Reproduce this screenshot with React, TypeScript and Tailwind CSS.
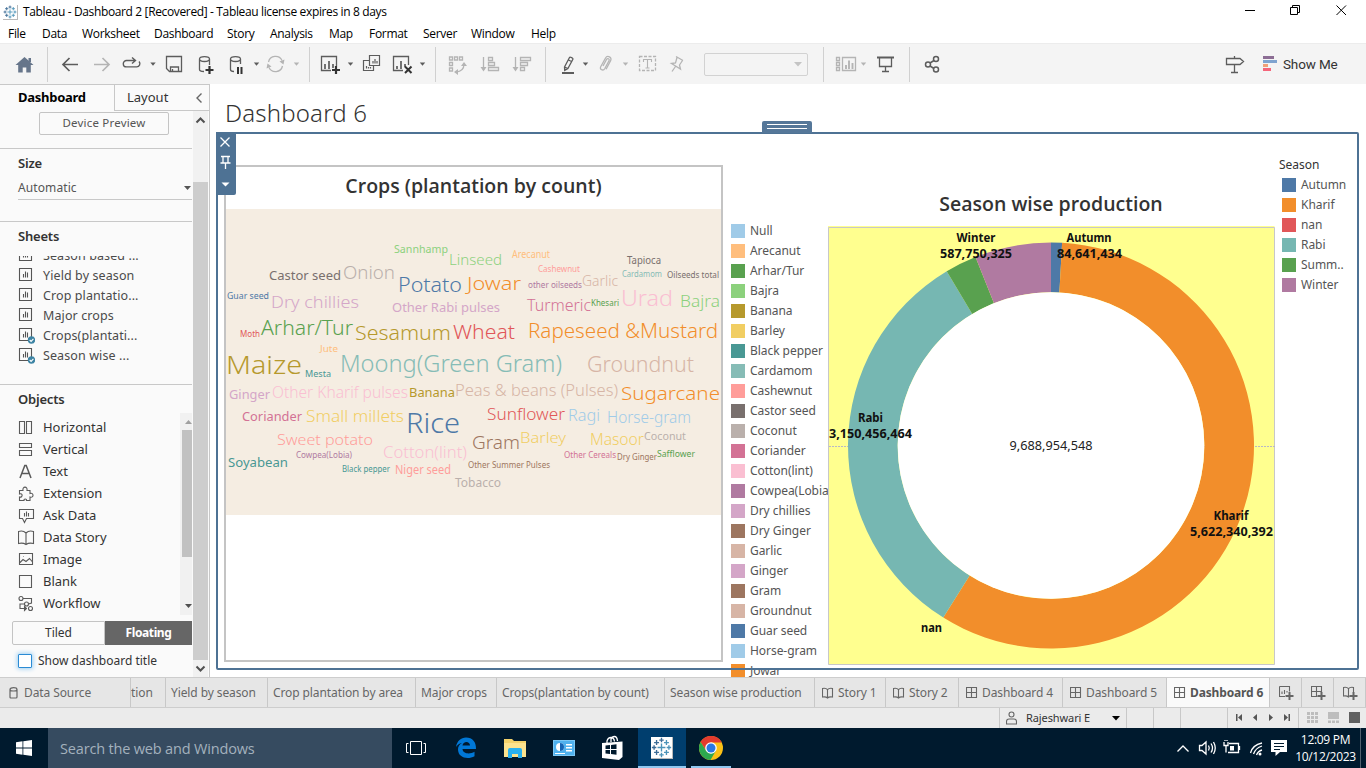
import React from "react";

type Kids = { children?: React.ReactNode };

/* Toolbar glyph: a cell that spans [x, x+w] of the window and keeps window coordinates inside. */
function Cell({ x, w, y = 44, h = 40, c = "#5c5c5c", sw = 1.3, children }: Kids & { x: number; w: number; y?: number; h?: number; c?: string; sw?: number }) {
  return (
    <svg className="block shrink-0" width={w} height={h} viewBox={`${x} ${y} ${w} ${h}`} fill="none" stroke={c} strokeWidth={sw}>
      {children}
    </svg>
  );
}

const Caret = ({ x, y = 64, c = "#5c5c5c" }: { x: number; y?: number; c?: string }) => (
  <path d={`M${x - 2.7} ${y - 1.5}h5.4l-2.7 3.2z`} fill={c} stroke="none" />
);
const Sep = ({ x }: { x: number }) => <path d={`M${x + 0.5} 47v35`} stroke="#d0d0d0" strokeWidth="1" />;
const LIGHT = "#b4b4b4";

const SPOKES = [[0, 0, 3.2], [0, -6, 1.8], [0, 6, 1.8], [-6, 0, 1.8], [6, 0, 1.8], [-4, -4, 2], [4, -4, 2], [-4, 4, 2], [4, 4, 2]];
function TableauMark({ s }: { s: number }) {
  return (
    <svg width={s} height={s} viewBox="-8.5 -8.5 17 17" className="block shrink-0 border-r border-b border-[#b9b9b9] bg-white">
      {SPOKES.map(([x, y, r], i) => (
        <path key={i} d={`M${x - r} ${y}h${2 * r}M${x} ${y - r}v${2 * r}`} stroke={i % 2 ? "#3d6c96" : "#4c93b8"} strokeWidth="1.1" />
      ))}
    </svg>
  );
}

function TitleBar() {
  return (
    <div className="flex h-[24px] items-center bg-white">
      <div className="ml-[3px] mr-[5px]"><TableauMark s={15} /></div>
      <span className="whitespace-nowrap text-[12px] text-black tracking-[-0.36px]">Tableau - Dashboard 2 [Recovered] - Tableau license expires in 8 days</span>
      <svg className="ml-auto block" width="126" height="24" viewBox="1240 0 126 24" fill="none" stroke="#000" strokeWidth="1">
        <path d="M1245 10.5h10M1290.5 7.5h7v7h-7zM1292.5 7v-1.500h7v7h-1.500M1336.500 5.500l9.500 9.500M1346 5.500l-9.500 9.500" />
      </svg>
    </div>
  );
}

const MENU: [string, string][] = [
  ["File", "w-[34px]"], ["Data", "w-[40px]"], ["Worksheet", "w-[72px]"], ["Dashboard", "w-[73px]"], ["Story", "w-[43px]"],
  ["Analysis", "w-[59px]"], ["Map", "w-[40px]"], ["Format", "w-[54px]"], ["Server", "w-[48px]"], ["Window", "w-[60px]"], ["Help", "w-[40px]"],
];

function MenuBar() {
  return (
    <div className="flex h-[19px] items-center bg-white pl-[8px] text-[12px] tracking-[-0.3px] text-black">
      {MENU.map(([t, w]) => <span key={t} className={w}>{t}</span>)}
    </div>
  );
}

function Toolbar() {
  return (
    <div className="flex h-[41px] items-center border-t border-[#ececec] bg-[#f4f4f4]">
      <Cell x={0} w={47}><path d="M24.500 57l9 8h-2.700v7.500h-4.500v-5h-3.600v5h-4.500V65h-2.700z" fill="#66758a" stroke="none" /><path d="M28.500 58h2.500v4h-2.500z" fill="#66758a" stroke="none" /></Cell>
      <Cell x={47} w={39} sw={1.7}><Sep x={47} /><path d="M78 64.500H63M69.500 58l-6.500 6.500 6.500 6.500" /></Cell>
      <Cell x={86} w={30} c={LIGHT} sw={1.7}><path d="M94 64.500h15M102.500 58l6.500 6.500-6.500 6.500" /></Cell>
      <Cell x={116} w={44} sw={1.4}><path d="M135 60.500h-8.500a3.200 3.200 0 0 0 0 6.400h10a3.200 3.200 0 0 0 2.500-5.400M132 57.500l3.500 3-3.500 3" /><Caret x={153} /></Cell>
      <Cell x={160} w={30}><path d="M166.500 56.500h15v15h-12l-3-3zM170.500 71v-4h8v4M172.500 69v2" /></Cell>
      <Cell x={190} w={34}><path d="M204 71.500c-3 0-4.500-.8-4.500-2V59c0-3.300 10-3.300 10 0v6M199.500 59c0 3.300 10 3.300 10 0" /><path d="M209.500 66v8M205.500 70h8" strokeWidth="2.200" stroke="#333" /></Cell>
      <Cell x={224} w={38}><path d="M234 71.500c-2.500 0-3.500-.8-3.500-2V59c0-3.300 10-3.300 10 0v5M230.500 59c0 3.300 10 3.300 10 0" /><path d="M238 67v7M241.500 67v7" strokeWidth="2" stroke="#333" /><Caret x={256.500} /></Cell>
      <Cell x={262} w={47} c={LIGHT}><path d="M268.500 62a7.200 7.200 0 0 1 13.500-1.500M282.500 66a7.200 7.200 0 0 1-13.500 1.500" /><path d="M284.500 59.500l-1 5-4-3zM266.500 68.500l1-5 4 3z" fill={LIGHT} stroke="none" /><Caret x={296.500} c={LIGHT} /></Cell>
      <Cell x={309} w={48}><Sep x={309} /><path d="M331 70.500h-9.500v-14h15V66" /><path d="M325 64v5M329 61v8M333 64v4" strokeWidth="1.700" /><path d="M336 66v8M332 70h8" strokeWidth="2.200" stroke="#333" /><Caret x={350.500} /></Cell>
      <Cell x={357} w={30} sw={1.2}><path d="M369.500 55.500h10v10h-10zM369 60.500h-5.500v10h10V66M373 61v2.500M375 59v4.500M377 61v2.500M366.500 66v2.500M368.500 67v1.500M370.500 67v1.500" /></Cell>
      <Cell x={387} w={48}><path d="M403 70.500h-9.500v-14h15V65" /><path d="M397 66v3M401 61v8M405 64v3" strokeWidth="1.700" /><path d="M405 66.500l6.500 6.500M411.500 66.500L405 73" strokeWidth="2" stroke="#333" /><Caret x={422.500} /></Cell>
      <Cell x={435} w={40} c={LIGHT}><Sep x={435} /><path d="M449.500 57h3v3h-3zM454.500 57h3v3h-3zM459.500 57h3v3h-3zM449.500 62.500h3v3h-3zM449.500 68h3v3h-3zM464 64c0 5-2 7.500-8 8" /><path d="M461 66l3-4 3 4zM458 69l-4 3 4 3z" fill={LIGHT} stroke="none" /></Cell>
      <Cell x={475} w={32} c={LIGHT}><path d="M483.500 57v12M488.500 57.500h4v3h-4zM488.500 62.500h6v3h-6zM488.500 67.500h10v3h-10z" /><path d="M480.500 67h6l-3 4.500z" fill={LIGHT} stroke="none" /></Cell>
      <Cell x={507} w={38} c={LIGHT}><path d="M515.500 57v12M520.500 57.500h10v3h-10zM520.500 62.500h7v3h-7zM520.500 67.500h4v3h-4z" /><path d="M512.500 67h6l-3 4.500z" fill={LIGHT} stroke="none" /></Cell>
      <Cell x={545} w={46}><Sep x={545} /><path d="M564.500 67l5-9.500c.5-1 4 .6 3.400 1.700l-5 9.300-3.200 1.800zM564.500 67l3.400 1.700M568.500 60l3 1.500" /><path d="M562 73h12" strokeWidth="2" /><Caret x={585.500} /></Cell>
      <Cell x={591} w={42} c={LIGHT}><path d="M603 66l3.500-6.500c1-1.800 3.400-.5 2.500 1.200l-4.300 8c-1.500 2.600-5.500.8-4-2l4.700-8.500c2-3.500 7-1 5.200 2.500l-4.500 8.500" /><Caret x={625.500} c={LIGHT} /></Cell>
      <Cell x={633} w={30} c={LIGHT}><path d="M639.500 56.500h16v14h-16z" strokeDasharray="3 1.500" /><path d="M643.500 62v-2.500h8V62M647.500 59.500v8.500M645.500 68h4" strokeWidth="1.100" /></Cell>
      <Cell x={663} w={41} c={LIGHT}><path d="M676 56.500l7 4M677 57.500l-1.500 5.500-4 .5 9 5.500-1-4 3-4.500M675.500 66.500l-3.500 5" /></Cell>
      <div className="flex h-[23px] w-[104px] items-center justify-end rounded-[2px] border border-[#d2d2d2] pr-[5px]"><svg width="8" height="5"><path d="M0 0h8l-4 4.500z" fill="#c4c4c4" /></svg></div>
      <Cell x={808} w={63} c={LIGHT}><Sep x={823} /><path d="M836.500 57.500h3v3h-3zM836.500 62.500h3v3h-3zM836.500 67.500h3v3h-3zM842.500 57.500h13v13h-13z" /><path d="M846 65v4M849 60.500v8.500M852.500 63v6" strokeWidth="1.900" /><Caret x={863.500} c={LIGHT} /></Cell>
      <Cell x={871} w={38}><path d="M877 57.500h17" strokeWidth="2" /><path d="M879.500 58v8.500h12V58M885.500 66.500v5M882 71.500h7" /></Cell>
      <Cell x={909} w={40} sw={1.500}><Sep x={909} /><circle cx="928" cy="64.500" r="2.500" /><circle cx="936" cy="59" r="2.500" /><circle cx="936" cy="69.500" r="2.500" /><path d="M930 63l4-2.500M930 66l4 2.500" /></Cell>
      <div className="ml-auto flex items-center">
        <Cell x={1220} w={63}>
          <path d="M1226.500 58.500h13.500l3.500 3-3.500 3h-13.500zM1234.500 56v2.500M1234.500 64.500v8M1231 72.500h7" />
          <path d="M1263 57.500h11" stroke="#8c6d94" strokeWidth="3" /><path d="M1263 61.500h14" stroke="#7fa4d0" strokeWidth="3" /><path d="M1263 65.500h5" stroke="#f0a078" strokeWidth="3" /><path d="M1263 69.500h8" stroke="#f5657a" strokeWidth="3" />
        </Cell>
        <span className="w-[83px] whitespace-nowrap font-['Roboto'] text-[13.500px] tracking-[-0.15px] text-[#333]">Show Me</span>
      </div>
    </div>
  );
}

const SHEETS: [string, boolean][] = [["Season based ...", false], ["Yield by season", false], ["Crop plantatio...", false], ["Major crops", false], ["Crops(plantati...", true], ["Season wise ...", true]];

const OBJECTS: [string, React.ReactNode][] = [
  ["Horizontal", <path d="M1.500 2.500h5v12h-5zM8.500 2.500h5v12h-5z" />],
  ["Vertical", <path d="M1.500 2.500h12v4h-12zM1.500 9.500h12v5h-12z" />],
  ["Text", <path d="M2 15L6.800 2.500h1.400L13 15M3.800 10.500h7.400" strokeWidth="1.500" />],
  ["Extension", <path d="M1.500 5.500h3.500c-1-4.500 5-4.500 4 0h3v3c4-1.500 4 5 0 3.500v3.500h-3.500c.5-2-3-2-2.500 0H1.500v-3.500c3.500 1 3.500-4.500 0-3z" />],
  ["Ask Data", <path d="M1.500 2.500h14v9h-7l-2 4-2-4h-3zM6.500 6v3.500M8.500 4.500v5M10.500 6v3.500" />],
  ["Data Story", <path d="M.5 2.500c3-1 6 0 7.500 1.500 1.500-1.500 4.500-2.500 7.500-1.500v12c-3-.7-6 0-7.500 1-1.500-1-4.500-1.700-7.500-1zM8 4v11" />],
  ["Image", <path d="M1.500 2.500h13v11h-13zM2 11.500l3-3 3 2 3.500-3 3 3.500M5 5.500h.5" />],
  ["Blank", <path d="M1.500 2.500h12v12h-12z" />],
  ["Workflow", <g><circle cx="3" cy="3.500" r="2" /><circle cx="8.500" cy="9" r="2" /><circle cx="12.500" cy="13.500" r="2" /><path d="M5 3.500h8.500V8l-3 1M6.500 9H2v4.500h6M6.500 11.500v4l2-2z" /></g>],
];

function SidePanel() {
  return (
    <div className="relative flex w-[210px] shrink-0 flex-col border-t border-r border-[#c8c8c8] bg-[#fafafa] font-['Noto_Sans'] text-[#333]">
      <div className="flex h-[26px] shrink-0">
        <div className="w-[114px] pl-[18px] text-[13px] font-bold leading-[25px] tracking-[-0.27px] text-black">Dashboard</div>
        <div className="flex flex-1 items-center justify-between border-b border-l border-[#c8c8c8] pl-[12px] pr-[7px] text-[13px]">
          <span>Layout</span>
          <svg width="6" height="12" fill="none" stroke="#666" strokeWidth="1.400"><path d="M5.500 1.500L1 6l4.500 4.500" /></svg>
        </div>
      </div>
      <div className="flex min-h-0 flex-1">
        <div className="flex w-[192px] flex-col">
          <div className="mt-px ml-[39px] h-[23px] w-[130px] rounded-[2px] border border-[#c4c4c4] text-center text-[11.500px] leading-[20px] tracking-[0.2px] text-[#555]">Device Preview</div>
          <div className="mt-[13px] border-t border-[#c8c8c8]" />
          <div className="mt-[5px] pl-[18px] text-[13px] font-semibold leading-[18px] tracking-[-0.2px]">Size</div>
          <div className="ml-[18px] mt-[4px] flex h-[24px] items-center justify-between border-b border-[#c8c8c8] pt-px text-[12px] text-[#555]">
            <span className="tracking-[0.1px]">Automatic</span><svg width="8" height="5"><path d="M0 0h7l-3.500 4z" fill="#555" /></svg>
          </div>
          <div className="mt-[21px] border-t border-[#c8c8c8]" />
          <div className="mt-[5px] pl-[18px] text-[13px] font-semibold leading-[18px] tracking-[-0.2px]">Sheets</div>
          <div className="mt-[11px] flex h-[109px] flex-col justify-end overflow-hidden">
            {SHEETS.map(([t, used]) => (
              <div key={t} className="flex h-[20px] shrink-0 items-center pl-[18px] text-[12.500px] tracking-[0.1px] text-[#4a4a4a]">
                <svg className="mr-[8px]" width="17" height="18" fill="none" stroke="#555" strokeWidth="1.100">
                  <path d="M1.500 2.500h12v12h-12zM5.500 8v3.500M7.500 5.500v6M9.500 6.500v5" />
                  {used && <><circle cx="13.500" cy="14" r="3.700" fill="#3c83a3" stroke="none" /><path d="M11.700 14l1.400 1.400 2.300-2.600" stroke="#fff" /></>}
                </svg>
                <span className="pt-[2px]">{t}</span>
              </div>
            ))}
          </div>
          <div className="mt-[19px] border-t border-[#c8c8c8]" />
          <div className="mt-[5px] pl-[18px] text-[13px] font-semibold leading-[18px] tracking-[-0.2px]">Objects</div>
          <div className="mt-[5px] flex h-[202px]">
            <div className="w-[180px] pt-[3px]">
              {OBJECTS.map(([t, icon]) => (
                <div key={t} className="flex h-[22px] items-center pl-[18px] text-[13px] tracking-[-0.03px]">
                  <svg className="mr-[8px]" width="17" height="17" fill="none" stroke="#5a5a5a" strokeWidth="1.100">{icon}</svg>
                  <span className="pt-[2px]">{t}</span>
                </div>
              ))}
            </div>
            <div className="flex w-[12px] flex-col items-end justify-between bg-[#f1f1f1]">
              <svg width="10" height="17"><path d="M3 11h7l-3.500-4z" fill="#a0a0a0" /></svg>
              <div className="h-[127px] w-[10px] bg-[#c1c1c1]" />
              <svg className="mt-auto" width="10" height="13"><path d="M3 2h7l-3.500 4z" fill="#505050" /></svg>
            </div>
          </div>
          <div className="ml-[12px] mt-[6px] flex h-[24px] text-center text-[12px] leading-[22px]">
            <div className="w-[93px] rounded-l-[2px] border border-[#c4c4c4]">Tiled</div>
            <div className="flex-1 bg-[#666] font-bold leading-[24px] tracking-[-0.4px] text-white">Floating</div>
          </div>
          <div className="mt-[9px] flex items-center pl-[18px] text-[12px]">
            <div className="mr-[6px] h-[14px] w-[14px] rounded-[1px] border border-[#2b8bd4] bg-white shadow-[0_0_4px_1px_#9fd0f3]" />
            <span className="leading-[14px] tracking-[0px]">Show dashboard title</span>
          </div>
        </div>
        <div className="ml-px flex w-[15px] flex-col items-center bg-[#f1f1f1]">
          <svg width="15" height="71" fill="none" stroke="#505050" strokeWidth="2"><path d="M3.500 11.500l4-4 4 4" /></svg>
          <div className="w-full flex-1 bg-[#cdcdcd]" />
          <svg width="15" height="17" fill="none" stroke="#505050" strokeWidth="2"><path d="M3.500 6.500l4 4 4-4" /></svg>
        </div>
      </div>
    </div>
  );
}

const C = {
  lblue: "#a0cbe8", or: "#f28e2b", lor: "#ffbe7d", gr: "#59a14f", lgr: "#8cd17d", br: "#b6992d", ye: "#f1ce63", te: "#499894", lte: "#86bcb6",
  re: "#e15759", lre: "#ff9d9a", gy: "#79706e", lgy: "#bab0ac", pk: "#d37295", lpk: "#fabfd2", pu: "#b07aa1", lpu: "#d4a6c8", bn: "#9d7660", lbn: "#d7b5a6", bl: "#4e79a7",
};

/* word, left, baseline, font size, drawn width, colour */
const WORDS: [string, number, number, number, number, string][] = [
  ["Sannhamp", 394, 253, 11, 54, C.lgr], ["Linseed", 449, 264, 15, 53, C.lgr], ["Castor seed", 269, 279, 13, 72, C.gy], ["Onion", 343, 278, 18.5, 52, C.lgy],
  ["Potato", 398, 291, 19.5, 64, C.bl], ["Guar seed", 227, 299, 9.5, 42, C.bl], ["Dry chillies", 271, 307, 16, 88, C.lpu], ["Other Rabi pulses", 392, 311, 13, 108, C.lpu],
  ["Moth", 240, 337, 8.5, 20, C.re], ["Arhar/Tur", 261, 334, 19.5, 92, C.gr], ["Sesamum", 355, 339, 20, 96, C.br], ["Wheat", 453, 338, 20, 62, C.re],
  ["Jute", 320, 352, 9, 18, C.lor], ["Maize", 226, 373, 26, 76, C.br], ["Mesta", 305, 377, 9, 26, C.te], ["Moong(Green Gram)", 340, 371, 23.5, 222, C.lte],
  ["Ginger", 229, 398, 13, 41, C.lpu], ["Other Kharif pulses", 272, 397, 15.500, 136, C.lpk], ["Banana", 409, 396, 13, 46, C.br], ["Peas & beans (Pulses)", 455, 395, 16, 163, C.lbn],
  ["Coriander", 242, 420, 13, 60, C.pk], ["Small millets", 306, 421, 16, 98, C.ye], ["Rice", 406, 432, 27, 54, C.bl], ["Sweet potato", 277, 444, 15, 96, C.lre],
  ["Gram", 472, 448, 18.500, 48, C.bn], ["Cowpea(Lobia)", 296, 458, 8.500, 56, C.pu], ["Cotton(lint)", 383, 457, 16, 84, C.lpk], ["Soyabean", 228, 466, 13, 60, C.te],
  ["Black pepper", 342, 472, 9, 48, C.te], ["Niger seed", 395, 474, 12, 56, C.lre], ["Other Summer Pulses", 468, 468, 8.500, 82, C.bn], ["Tobacco", 455, 487, 12.500, 46, C.lgy],
  ["Jowar", 467, 289, 19, 54, C.or], ["Arecanut", 512, 258, 10, 38, C.lor], ["Cashewnut", 538, 272, 9, 42, C.lre], ["other oilseeds", 528, 288, 9, 54, C.pu],
  ["Garlic", 582, 285, 14, 36, C.lbn], ["Tapioca", 627, 264, 10, 34, C.gy], ["Cardamom", 622, 277, 9, 40, C.lte], ["Oilseeds total", 667, 278, 9, 52, C.gy],
  ["Turmeric", 527, 310, 15.500, 64, C.pk], ["Khesari", 591, 306, 8.500, 28, C.gr], ["Urad", 621, 305, 22, 52, C.lpk], ["Bajra", 680, 306, 16, 40, C.lgr],
  ["Rapeseed &Mustard", 528, 337, 19.500, 190, C.or], ["Groundnut", 587, 371, 21, 107, C.lbn], ["Sugarcane", 621, 399, 19, 99, C.or], ["Sunflower", 487, 419, 15.500, 78, C.re],
  ["Ragi", 568, 420, 16, 32, C.lblue], ["Horse-gram", 607, 422, 15.500, 84, C.lblue], ["Barley", 520, 442, 15, 46, C.ye], ["Masoor", 590, 444, 15.500, 54, C.ye],
  ["Coconut", 644, 440, 11.500, 42, C.lgy], ["Other Cereals", 564, 458, 9, 52, C.pk], ["Dry Ginger", 617, 460, 9, 40, C.bn], ["Safflower", 657, 457, 9, 38, C.gr],
];

const CROPS: [string, string][] = [
  ["Null", C.lblue], ["Arecanut", C.lor], ["Arhar/Tur", C.gr], ["Bajra", C.lgr], ["Banana", C.br], ["Barley", C.ye], ["Black pepper", C.te], ["Cardamom", C.lte],
  ["Cashewnut", C.lre], ["Castor seed", C.gy], ["Coconut", C.lgy], ["Coriander", C.pk], ["Cotton(lint)", C.lpk], ["Cowpea(Lobia)", C.pu], ["Dry chillies", C.lpu],
  ["Dry Ginger", C.bn], ["Garlic", C.lbn], ["Ginger", C.lpu], ["Gram", C.bn], ["Groundnut", C.lbn], ["Guar seed", C.bl], ["Horse-gram", C.lblue], ["Jowar", C.or],
];
const SEASONS: [string, string][] = [["Autumn", C.bl], ["Kharif", C.or], ["nan", C.re], ["Rabi", "#76b7b2"], ["Summ..", C.gr], ["Winter", C.pu]];

function Legend({ items }: { items: [string, string][] }) {
  return (
    <>
      {items.map(([t, c]) => (
        <div key={t} className="flex h-[20px] items-center whitespace-nowrap text-[12px] tracking-[-0.05px] text-[#555]">
          <svg className="mr-[5px] block shrink-0" width="14" height="14"><rect width="14" height="14" fill={c} /></svg>
          {t}
        </div>
      ))}
    </>
  );
}

const CX = 1051, CY = 445.5, RO = 203, RI = 153.3;
function arc(a0: number, a1: number) {
  const p = (r: number, a: number) => `${CX + r * Math.sin((a * Math.PI) / 180)} ${CY - r * Math.cos((a * Math.PI) / 180)}`;
  const big = a1 - a0 > 180 ? 1 : 0;
  return `M${p(RO, a0)}A${RO} ${RO} 0 ${big} 1 ${p(RO, a1)}L${p(RI, a1)}A${RI} ${RI} 0 ${big} 0 ${p(RI, a0)}Z`;
}
const SLICES: [number, number, string][] = [[0, 3.14, C.bl], [3.14, 212.05, C.or], [212.05, 329.1, "#76b7b2"], [329.1, 338.16, C.gr], [338.16, 360, C.pu]];
const MARKS: [string, number, number, number][] = [
  ["Winter", 976, 242, 39], ["587,750,325", 976, 258, 72], ["Autumn", 1089, 242, 45], ["84,641,434", 1089.500, 258, 65], ["Rabi", 870.500, 422, 25],
  ["3,150,456,464", 870.500, 438, 83], ["Kharif", 1231, 520, 35], ["5,622,340,392", 1231.500, 536, 83], ["nan", 931.500, 632, 21],
];

function Canvas() {
  return (
    <div className="relative flex flex-1 flex-col overflow-hidden bg-white font-['Noto_Sans']">
      <div className="h-[82px] shrink-0 pl-[15px] pt-[12px] text-[24px] font-light leading-[34px] tracking-[0.18px] text-[#333]">Dashboard 6</div>
      <div className="flex items-start">
        <div className="ml-[14px] mt-[-1px] flex h-[497px] w-[499px] shrink-0 flex-col border-2 border-[#c4c4c4]">
          <div className="h-[42px] pt-[5px] text-center font-['Open_Sans','Noto_Sans'] text-[19.500px] font-semibold leading-[28px] tracking-[0px] text-[#333]">Crops (plantation by count)</div>
          <svg className="block bg-[#f5ede2]" width="495" height="306" viewBox="226 209 495 306">
            {WORDS.map(([t, x, y, s, w, c]) => (
              <text key={t} x={x} y={s < 13 ? y : y + 0.6} fontSize={s} textLength={w} lengthAdjust="spacingAndGlyphs" fill={c} fontWeight={s < 14 ? 400 : 300}>{t}</text>
            ))}
          </svg>
        </div>
        <div className="ml-[8px] mt-[55px] h-[460px] w-[97px] shrink-0 overflow-hidden"><Legend items={CROPS} /></div>
        <div className="mt-[20px] w-[448px] shrink-0">
          <div className="h-[40px] pr-[2px] text-center font-['Open_Sans','Noto_Sans'] text-[19.500px] font-semibold leading-[36px] tracking-[0px] text-[#333]">Season wise production</div>
          <svg className="block" width="448" height="439" viewBox="828 226 448 439">
            <path d="M828 226h446.500v438.500H828z" fill="#ffff8f" /><path d="M828.500 227.500h446v437h-446z" fill="none" stroke="#c8c8c8" />
            <path d="M829 446.500h446" stroke="#b8b8c8" strokeDasharray="2 1" />
            {SLICES.map(([a, b, c]) => <path key={a} d={arc(a, b)} fill={c} />)}
            <circle cx={CX} cy={CY} r={RI} fill="#fff" />
            {MARKS.map(([t, x, y, w]) => <text key={t} x={x - w / 2} y={y} textLength={w} lengthAdjust="spacingAndGlyphs" fontSize="12" fontWeight="700" fill="#111">{t}</text>)}
            <text x="1009.500" y="450" textLength="83" lengthAdjust="spacingAndGlyphs" fontSize="12" fill="#222">9,688,954,548</text>
          </svg>
        </div>
        <div className="ml-[3px] mt-[-11px] w-[78px] text-[12px]">
          <div className="h-[20px] leading-[20px] text-[#333]">Season</div>
          <div className="pl-[3px]"><Legend items={SEASONS} /></div>
        </div>
      </div>
      <div className="absolute left-[6px] top-[48px] h-[538px] w-[1143px] rounded-[2px] border-2 border-[#4e7294]" />
      <svg className="absolute left-[552px] top-[37px]" width="50" height="12"><path d="M0 12V2q0-2 2-2h46q2 0 2 2v10z" fill="#557799" /><path d="M5 3.500h40M5 7.500h40" stroke="#fff" /></svg>
      <svg className="absolute left-[6px] top-[48px]" width="20" height="63" fill="none" stroke="#fff" strokeWidth="1.300">
        <path d="M0 0h20v61q0 2-2 2H0z" fill="#4e7294" stroke="none" />
        <path d="M4.500 5.500l9 9M13.500 5.500l-9 9M5 24.500h9M7 24.500v6M12 24.500v6M4.500 31h10M9.500 31v6" /><path d="M5.500 50.500h8l-4 4z" fill="#fff" stroke="none" />
      </svg>
    </div>
  );
}

const bookD = "M.5 1.500c2.500-.5 4 0 5 1.200 1-1.200 2.500-1.700 5-1.200v8.500c-2.500-.4-4 0-5 1-1-1-2.500-1.400-5-1zM5.500 2.700V11";
const gridD = "M.5 .5h10v10H.5zM.5 5.500h10M5.500 .5v10";
const TABS: [string, string, string][] = [
  ["tion", "w-[35px]", ""], ["Yield by season", "w-[102px] pl-[5px]", ""], ["Crop plantation by area", "w-[148px] pl-[5px]", ""], ["Major crops", "w-[81px] pl-[5px]", ""],
  ["Crops(plantation by count)", "w-[168px] pl-[5px]", ""], ["Season wise production", "w-[150px] pl-[5px]", ""], ["Story 1", "w-[71px] pl-[7px]", bookD],
  ["Story 2", "w-[73px] pl-[7px]", bookD], ["Dashboard 4", "w-[104px] pl-[7px]", gridD], ["Dashboard 5", "w-[104px] pl-[7px]", gridD],
];

function SheetTabs() {
  return (
    <div className="flex h-[31px] shrink-0 border-t border-b border-[#cdcdcd] bg-[#e6e6e6] font-['Noto_Sans'] text-[12px] tracking-[-0.1px] text-[#666]">
      <div className="flex w-[130px] items-center pl-[9px]">
        <svg className="mr-[6px]" width="9" height="12" fill="none" stroke="#666" strokeWidth="1.200"><path d="M1 2.500c0-2.500 7-2.500 7 0V10q0 1-1 1H2q-1 0-1-1zM1 2.500c0 2 7 2 7 0" /></svg>Data Source
      </div>
      {TABS.map(([t, w, d]) => (
        <div key={t} className={`flex shrink-0 items-center overflow-hidden whitespace-nowrap border-l border-[#c8c8c8] ${w}`}>
          {d && <svg className="mr-[4px]" width="12" height="12" fill="none" stroke="#666" strokeWidth="1.100"><path d={d} /></svg>}{t}
        </div>
      ))}
      <div className="flex w-[103px] items-center whitespace-nowrap border-l border-[#c8c8c8] bg-[#fafafa] pl-[7px] font-bold tracking-[-0.15px] text-[#555]">
        <svg className="mr-[4px] shrink-0" width="12" height="12" fill="none" stroke="#666" strokeWidth="1.100"><path d={gridD} /></svg>Dashboard 6
      </div>
      {["M.5 .5h10v5M6 10.500H.5V.5M3 5.500V8M5.500 4v4M8 5v2", gridD, bookD].map((d, i) => (
        <div key={i} className="flex w-[32px] items-center border-l border-[#c8c8c8] pl-[9px]">
          <svg width="16" height="16" viewBox="0 -1 16 16" fill="none" stroke="#666" strokeWidth="1.100"><path d={d} /><path d="M6.500 6.500h6v6h-6z" fill="#e6e6e6" stroke="none" /><path d="M10.500 6v8M6.500 10h8" strokeWidth="2" /></svg>
        </div>
      ))}
      <div className="border-l border-[#c8c8c8]" />
    </div>
  );
}

function StatusBar() {
  return (
    <div className="flex h-[20px] shrink-0 justify-end bg-[#ebebeb] font-['Noto_Sans'] text-[11px] tracking-[-0.1px] text-[#333]">
      <div className="flex w-[127px] items-center border-l border-[#c8c8c8] pl-[6px]">
        <svg className="mr-[9px]" width="11" height="14" fill="none" stroke="#666" strokeWidth="1.100"><circle cx="5.500" cy="3.500" r="2.500" /><path d="M.5 13V10.500q0-2.500 2.500-2.500h5q2.500 0 2.500 2.500V13z" /></svg>
        <span className="w-[86px]">Rajeshwari E</span>
        <svg width="8" height="5"><path d="M0 0h8l-4 4.500z" fill="#000" /></svg>
      </div>
      <div className="w-[27px] border-l border-[#c8c8c8]" />
      <div className="w-[27px] border-l border-[#c8c8c8]" />
      <div className="w-[47px] border-l border-[#c8c8c8]" />
      <div className="w-[71px] border-l border-[#c8c8c8]">
        <svg width="70" height="20" viewBox="1228 708 70 20" fill="#555"><path d="M1236 714h1.500v7h-1.500zM1242 714v7l-4-3.500zM1257 714v7l-4-3.500zM1269 714v7l4-3.500zM1284 714v7l4-3.500zM1288.500 714h1.500v7h-1.500z" /></svg>
      </div>
      <div className="w-[68px] border-l border-[#c8c8c8]">
        <svg width="66" height="20" viewBox="1299 708 66 20" fill="#bdbdbd">
          {[0, 1, 2].map((r) => [0, 1, 2].map((k) => <rect key={`${r}${k}`} x={1307 + k * 4} y={712 + r * 4} width="3" height="3" />))}
          <path d="M1328 712h11v7h-11zM1328 720.500h3v2.500h-3zM1332 720.500h3v2.500h-3zM1336 720.500h3v2.500h-3z" /><path d="M1349 712h11v11h-11z" fill="#606060" />
        </svg>
      </div>
    </div>
  );
}

function Taskbar() {
  return (
    <div className="flex h-[40px] shrink-0 bg-[#001a2e] text-white">
      <div className="flex w-[48px] items-center justify-center"><svg width="16" height="16" fill="#fff"><path d="M0 2.200L6.500 1.300V7.500H0zM7.300 1.200L16 0v7.500H7.300zM0 8.500h6.500v6.200L0 13.800zM7.300 8.500H16V16l-8.700-1.200z" /></svg></div>
      <div className="flex w-[344px] items-center bg-[#364b60] pl-[12px] pt-px text-[14.500px] tracking-[-0.17px] text-[#a3b1bd]">Search the web and Windows</div>
      <svg className="block" width="48" height="40" viewBox="392 728 48 40" fill="none" stroke="#fff"><path d="M410.500 741.500h11v13h-11zM408.500 743.500h-2v9h2M423.500 743.500h2v9h-2" /></svg>
      <svg className="block" width="50" height="40" viewBox="440 728 50 40"><path d="M456 747c1-6 5-9.500 10-9.500 6.500 0 10.300 4.500 10 11.500h-13.500c.3 5 7.500 5.500 12 2.700v4.500c-6.500 3.600-16.500 1.800-16.500-7 0-3 1.700-5.200 4-6.300-3 .4-5 2.200-6 4.100zM462.500 745.500h7.500c0-4.800-7-4.800-7.500 0z" fill="#0078d7" fillRule="evenodd" /></svg>
      <svg className="block" width="50" height="40" viewBox="490 728 50 40"><path d="M504 739h8l2 2h12v16h-22z" fill="#f3d26b" /><path d="M504 743h22v14h-22z" fill="#fce38e" /><path d="M508 750q0-2 2-2h10q2 0 2 2v8h-4v-4h-6v4h-4z" fill="#29b1ef" /></svg>
      <svg className="block" width="49" height="40" viewBox="540 728 49 40"><path d="M553 740h22v16h-22z" fill="#7cc8f5" /><path d="M554 741h20v14h-20z" fill="#4fb1ee" /><circle cx="560" cy="747" r="4" fill="#fff" /><path d="M560 747v-4a4 4 0 0 1 0 8z" fill="#1565b5" /><path d="M566 744h6v1.500h-6zM566 747h6v1.500h-6zM566 750h6v1.500h-6zM555 753h10v1h-10z" fill="#fff" /></svg>
      <svg className="block" width="49" height="40" viewBox="589 728 49 40"><path d="M602 743l20.500-1.500v15.500L619 760l-17-2z" fill="#fff" /><path d="M607 743v-2q1-3.500 4-3.500t3.500 4M611 742v-3q1-2.500 3.500-2.500t3 4.500" stroke="#fff" fill="none" strokeWidth="1.300" /><path d="M605.500 745.500l4.500-.5v4h-4.500zM611 745l5.500-.7v4.700H611zM605.500 750h4.500v4l-4.500-.5zM611 750h5.500v4.700l-5.500-.7z" fill="#001a2e" /></svg>
      <div className="flex w-[48px] items-center justify-center border-b-2 border-[#8fc7f0] bg-[#003e6e] pt-[2px]"><TableauMark s={22} /></div>
      <div className="ml-[5px] flex w-[40px] items-center justify-center border-b-2 border-[#8fc7f0] pt-[2px]">
        <svg width="24" height="24" viewBox="-12 -12 24 24"><circle r="12" fill="#fbc116" /><path d="M0-5.500h10.700A12 12 0 0 0-10.400-6L-4.800 2.700z" fill="#e33b2e" /><path d="M-4.800 2.700L-10.400-6A12 12 0 0 0-.5 12L5 2.500 0 5.500z" fill="#2da94f" /><circle r="5.800" fill="#fff" /><circle r="4.500" fill="#2a78e4" /></svg>
      </div>
      <svg className="ml-auto block" width="121" height="40" viewBox="1170 728 121 40" fill="none" stroke="#fff" strokeWidth="1.300">
        <path d="M1177.500 751.500l5.500-5.500 5.500 5.500M1199.500 745.500h2.500l4-3.500v12l-4-3.500h-2.500zM1208.500 745.500q1.500 2.500 0 5M1211 743.500q3 4.500 0 9M1213.500 742q3.500 6 0 12" />
        <path d="M1229 743.500h9.500v9H1228M1239.500 746v4M1224 742v3.500h4V742M1226 745.500v7M1225 741v-1M1227 741v-1" /><path d="M1230 746h4v4.500h-4z" fill="#fff" stroke="none" />
        <path d="M1250.500 753q2-8 11.500-10M1253.500 754q2-6 8.500-8M1256.500 755q1.500-4 5.500-5" /><circle cx="1260" cy="754" r="1.500" fill="#fff" stroke="none" />
        <path d="M1271 740h16v12h-7l-4.500 4v-4h-4.500z" fill="#fff" stroke="none" /><path d="M1274 743.500h10M1274 746.500h10M1274 749.500h6" stroke="#001a2e" strokeWidth="1" />
      </svg>
      <div className="flex w-[70px] flex-col items-center justify-center border-r border-[#50616f] text-[12px] leading-[17px] tracking-[-0.3px]"><span>12:09 PM</span><span>10/12/2023</span></div>
      <div className="w-[5px]" />
    </div>
  );
}

export default function App() {
  return (
    <div className="flex h-[768px] w-[1366px] flex-col overflow-hidden bg-white font-['Open_Sans','Noto_Sans',sans-serif]">
      <TitleBar />
      <MenuBar />
      <Toolbar />
      <div className="flex h-[593px] shrink-0">
        <SidePanel />
        <Canvas />
      </div>
      <SheetTabs />
      <StatusBar />
      <Taskbar />
    </div>
  );
}
